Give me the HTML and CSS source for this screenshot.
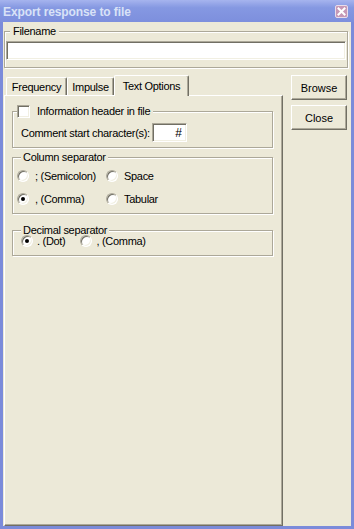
FILE: index.html
```html
<!DOCTYPE html>
<html>
<head>
    <title>Export response to file</title>
    <meta charset="UTF-8">
    <meta name="viewport" content="width=device-width, initial-scale=1.0">
    <link rel="stylesheet" href="styles.css">
</head>
<body>
    <div class="window">
        <div class="titlebar">
            <span class="title">Export response to file</span>
            <span class="close-btn">
                <svg width="9" height="9" viewBox="0 0 9 9"><path d="M1.5 1.5 L7.5 7.5 M7.5 1.5 L1.5 7.5" stroke="#fff" stroke-width="2" stroke-linecap="square"/></svg>
            </span>
        </div>

        <div class="client">
            <fieldset class="group filename-group">
                <legend>Filename</legend>
                <input type="text" class="textbox filename-input">
            </fieldset>

            <div class="main">
                <div class="tabs-area">
                    <div class="tabstrip">
                        <div class="tab tab-frequency">Frequency</div>
                        <div class="tab tab-impulse">Impulse</div>
                        <div class="tab tab-text active">Text Options</div>
                    </div>

                    <div class="panel">
                        <fieldset class="group header-group">
                            <legend class="check-legend">
                                <span class="checkbox"></span>
                                <span class="check-label">Information header in file</span>
                            </legend>
                            <div class="comment-row">
                                <span class="comment-label">Comment start character(s):</span>
                                <input type="text" class="textbox comment-input" value="#">
                            </div>
                        </fieldset>

                        <fieldset class="group column-group">
                            <legend>Column separator</legend>
                            <div class="radio-grid">
                                <div class="option"><span class="radio"></span>; (Semicolon)</div>
                                <div class="option"><span class="radio"></span>Space</div>
                                <div class="option"><span class="radio checked"></span>, (Comma)</div>
                                <div class="option"><span class="radio"></span>Tabular</div>
                            </div>
                        </fieldset>

                        <fieldset class="group decimal-group">
                            <legend>Decimal separator</legend>
                            <div class="radio-row">
                                <div class="option"><span class="radio checked"></span>. (Dot)</div>
                                <div class="option"><span class="radio"></span>, (Comma)</div>
                            </div>
                        </fieldset>
                    </div>
                </div>

                <div class="side">
                    <button type="button" class="btn">Browse</button>
                    <button type="button" class="btn">Close</button>
                </div>
            </div>
        </div>
    </div>
</body>
</html>
```

FILE: styles.css
```css
body {
    margin: 0;
    font-family: "Liberation Sans", Arial, sans-serif;
    font-size: 11px;
    letter-spacing: -0.3px;
    color: #000000;
    background-color: #7B8BDA;
}

.window {
    width: 354px;
    height: 529px;
    display: flex;
    flex-direction: column;
    background-color: #7B8BDA;
}

/* title bar */

.titlebar {
    height: 22px;
    flex-shrink: 0;
    display: flex;
    align-items: center;
    justify-content: space-between;
    padding: 0 6px 0 3px;
    background: linear-gradient(#A6B4EE, #8598E2 35%, #7D8FDD);
}

.title {
    font-weight: bold;
    font-size: 12px;
    letter-spacing: -0.1px;
    color: #D9E2F7;
    padding-top: 1px;
}

.close-btn {
    width: 11px;
    height: 11px;
    display: flex;
    align-items: center;
    justify-content: center;
    border: 1px solid #E8DCEA;
    border-radius: 2px;
    background-color: #C698B6;
    margin-top: 1px;
}

/* window body */

.client {
    flex: 1;
    display: flex;
    flex-direction: column;
    margin: 0 3px 3px;
    background-color: #ECE9D8;
}

.group {
    margin: 0;
    padding: 0 6px 0 4px;
    min-width: 0;
    border: 1px solid #ACA899;
    box-shadow: 1px 1px 0 #FFFFFF, inset 1px 1px 0 #FFFFFF;
}

.group legend {
    margin-left: 4px;
    padding: 0 2px;
    line-height: 13px;
    background-color: #ECE9D8;
}

.textbox {
    box-sizing: border-box;
    margin: 0;
    font-family: "Liberation Sans", Arial, sans-serif;
    font-size: 11px;
    background-color: #FFFFFF;
    border: 1px solid;
    border-color: #ACA899 #FFFFFF #FFFFFF #ACA899;
    box-shadow: inset 1px 1px 0 #716F64, inset -1px -1px 0 #F1EFE2;
    outline: none;
}

.filename-group {
    width: 344px;
    margin: 3px 0 0 1px;
    padding: 3px 1px 7px;
    box-sizing: border-box;
}

.filename-group legend {
    margin-left: 4px;
    padding: 0 3px;
}

.filename-input {
    display: block;
    width: 100%;
    height: 19px;
}

.main {
    flex: 1;
    display: flex;
    margin-top: 7px;
}

/* tabs */

.tabs-area {
    width: 279px;
    margin-left: 1px;
    display: flex;
    flex-direction: column;
}

.tabstrip {
    height: 20px;
    display: flex;
    align-items: flex-end;
    padding-left: 2px;
}

.tab {
    height: 18px;
    box-sizing: border-box;
    display: flex;
    align-items: center;
    justify-content: center;
    border-top: 1px solid #FFFFFF;
    border-left: 1px solid #FFFFFF;
    border-right: 1px solid #716F64;
    border-radius: 2px 2px 0 0;
    box-shadow: inset -1px 0 0 #ACA899;
}

.tab-frequency {
    width: 61px;
}

.tab-impulse {
    width: 47px;
}

.tab-text {
    width: 75px;
}

.tab.active {
    height: 21px;
    margin-bottom: -1px;
    position: relative;
    z-index: 1;
    background-color: #ECE9D8;
}

.panel {
    flex: 1;
    padding: 9px 9px 0 7px;
    border: 1px solid;
    border-color: #FFFFFF #716F64 #716F64 #FFFFFF;
    box-shadow: inset -1px -1px 0 #ACA899;
}

/* group contents */

.header-group {
    padding-bottom: 5px;
}

.header-group .check-legend {
    margin-left: 0;
    padding: 0 3px 0 0;
    display: flex;
    align-items: center;
}

.checkbox {
    width: 13px;
    height: 13px;
    box-sizing: border-box;
    margin-right: 7px;
    background-color: #FFFFFF;
    border: 1px solid;
    border-color: #ACA899 #FFFFFF #FFFFFF #ACA899;
    box-shadow: inset 1px 1px 0 #716F64, inset -1px -1px 0 #F1EFE2;
}

.comment-row {
    display: flex;
    align-items: center;
    margin: 5px 0 0 4px;
}

.comment-label {
    width: 131px;
}

.comment-input {
    width: 35px;
    height: 19px;
    padding: 0 4px 0 0;
    text-align: right;
    font-size: 12px;
}

.column-group {
    margin-top: 3px;
    padding-bottom: 3px;
}

.radio-grid {
    display: grid;
    grid-template-columns: 89px auto;
    grid-auto-rows: 23px;
    align-items: center;
}

.option {
    display: flex;
    align-items: center;
}

.radio {
    width: 12px;
    height: 12px;
    box-sizing: border-box;
    margin-right: 6px;
    display: flex;
    align-items: center;
    justify-content: center;
    border-radius: 50%;
    background-color: #FFFFFF;
    border: 1px solid;
    border-color: #ACA899 #FFFFFF #FFFFFF #ACA899;
    box-shadow: inset 1px 1px 0 #716F64, inset -1px -1px 0 #F1EFE2;
}

.radio.checked::after {
    content: "";
    width: 4px;
    height: 4px;
    border-radius: 50%;
    background-color: #000000;
}

.decimal-group {
    margin-top: 10px;
    padding-bottom: 8px;
}

.radio-row {
    display: flex;
    align-items: center;
    gap: 15px;
    height: 12px;
    margin-top: -2px;
    padding-left: 4px;
}

.radio-row .radio {
    margin-right: 4px;
}

/* side buttons */

.side {
    display: flex;
    flex-direction: column;
    gap: 5px;
    margin-left: 8px;
}

.btn {
    width: 56px;
    height: 25px;
    padding: 0;
    font-family: "Liberation Sans", Arial, sans-serif;
    font-size: 11px;
    color: #000000;
    background-color: #ECE9D8;
    border: 1px solid;
    border-color: #FFFFFF #716F64 #716F64 #FFFFFF;
    box-shadow: inset -1px -1px 0 #ACA899;
    cursor: pointer;
}
```
